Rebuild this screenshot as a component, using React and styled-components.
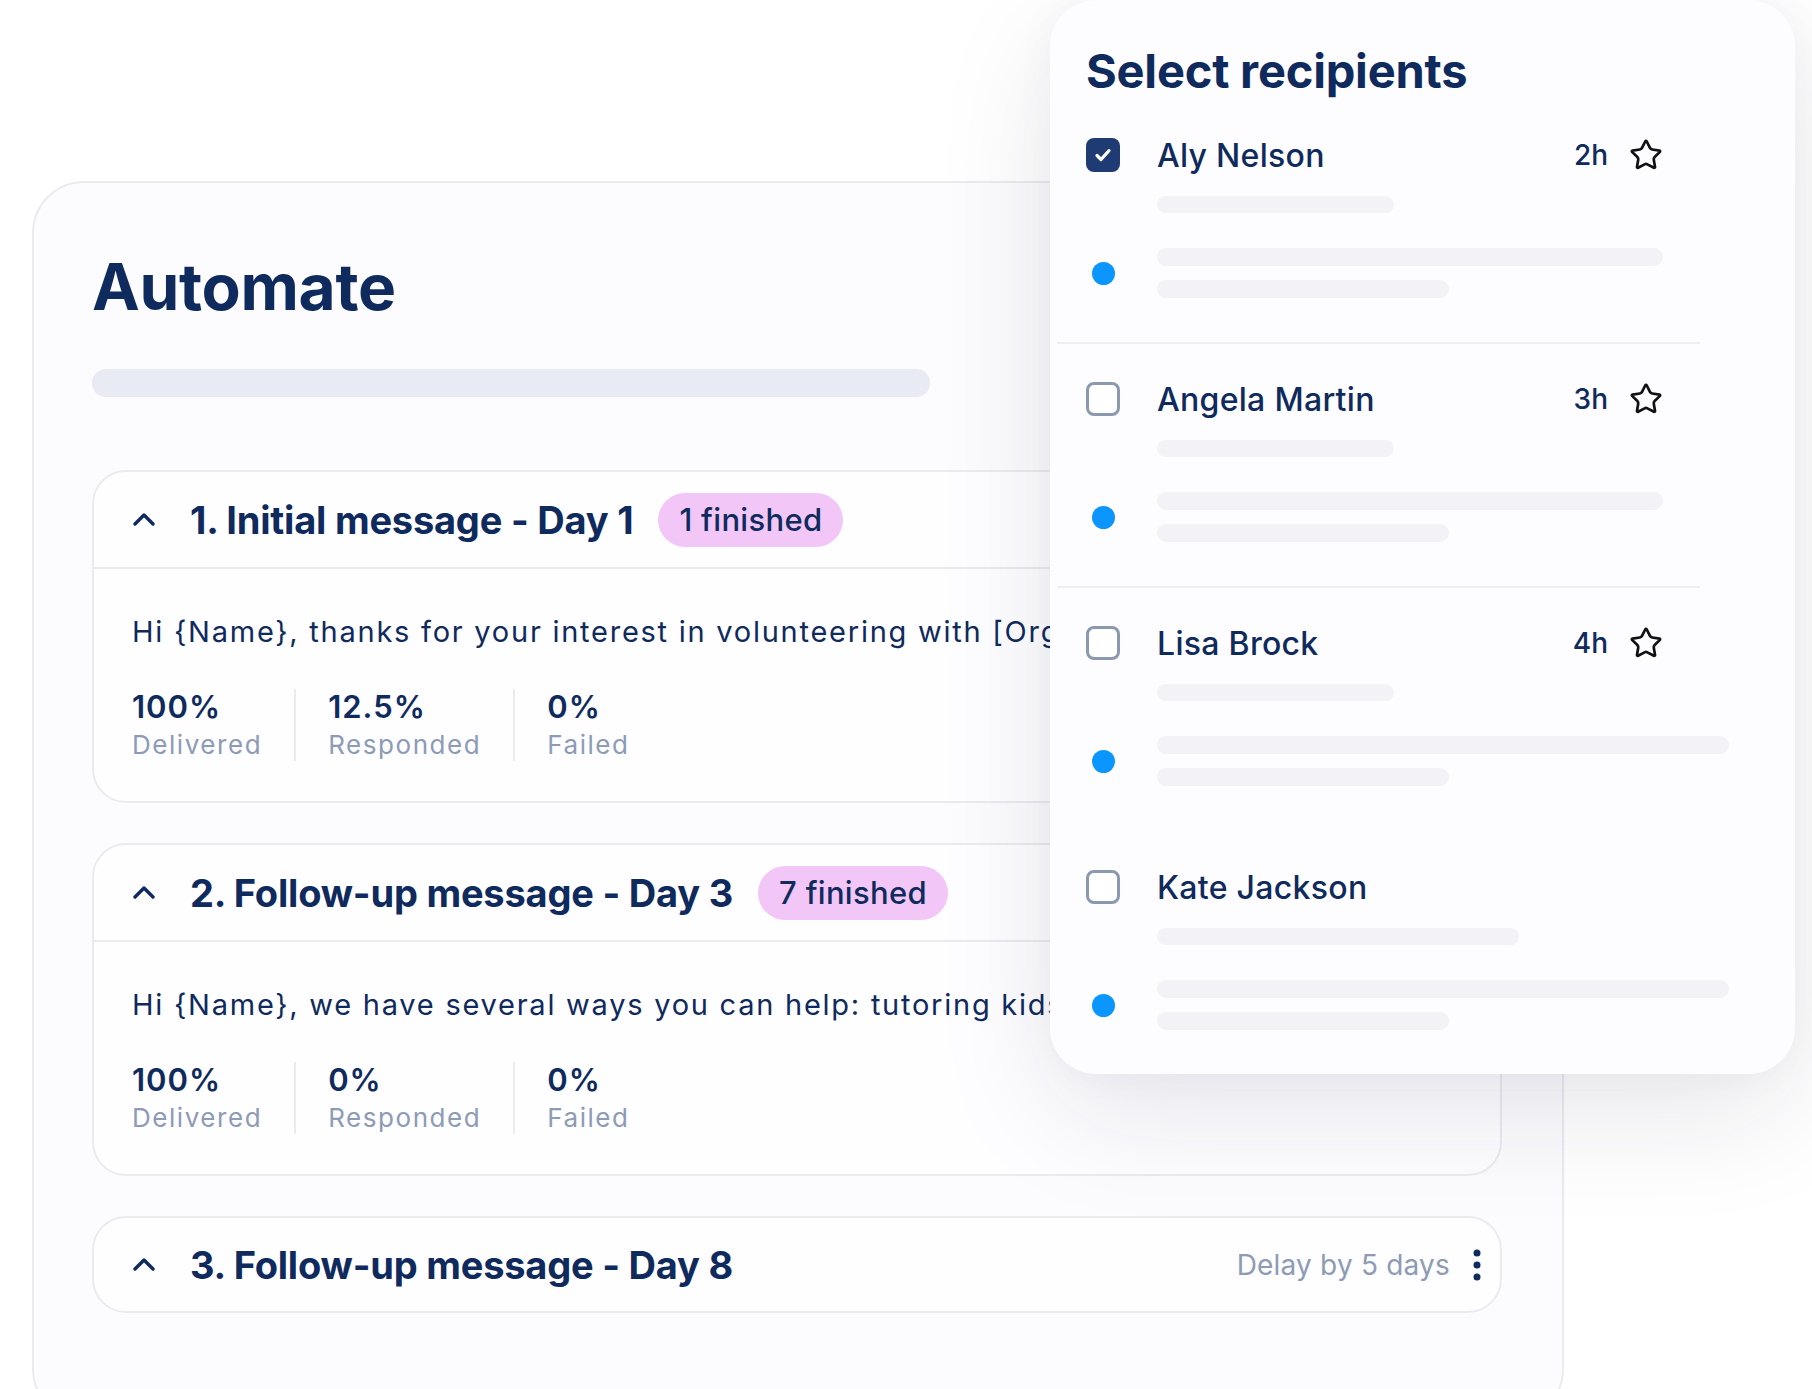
import React from 'react';
import styled, { createGlobalStyle } from 'styled-components';
import { Star } from 'lucide-react';

const NAVY = '#0f2a5c';
const GRAY = '#8d9bb5';
const LINE = '#ebeaef';

const GlobalStyle = createGlobalStyle`
  html, body { margin: 0; padding: 0; background: #ffffff; }
  body {
    font-family: Inter, "Open Sans", "Liberation Sans", sans-serif;
    color: ${NAVY};
    -webkit-font-smoothing: antialiased;
  }
  #root { width: 1812px; height: 1389px; overflow: hidden; }
  *, *::before, *::after { box-sizing: border-box; }
`;

const Stage = styled.div`
  position: relative;
  width: 1812px;
  height: 1389px;
  overflow: hidden;
  padding: 181px 0 0 32px;
`;

const MainCard = styled.section`
  width: 1532px;
  height: 1240px;
  border: 2px solid ${LINE};
  border-radius: 52px;
  background: #fcfbfd;
  padding: 65px 60px 0 58px;
`;

const Heading = styled.h1`
  margin: 0;
  font-size: 64px;
  line-height: 78px;
  font-weight: 700;
  letter-spacing: -0.3px;
  color: ${NAVY};
`;

const TitleBar = styled.div`
  margin-top: 43px;
  width: 838px;
  height: 28px;
  border-radius: 14px;
  background: #e8ebf3;
`;

const Steps = styled.div`
  margin-top: 73px;
  display: flex;
  flex-direction: column;
  gap: 40px;
`;

const StepCard = styled.article`
  border: 2px solid ${LINE};
  border-radius: 34px;
  background: #fefdff;
  overflow: hidden;
`;

const StepHeader = styled.header`
  height: ${p => (p.$open ? '97px' : '93px')};
  display: flex;
  align-items: center;
  padding: 0 19px 0 39px;
  border-bottom: ${p => (p.$open ? `2px solid ${LINE}` : 'none')};
`;

const Chevron = styled.svg`
  flex: none;
  width: 22px;
  height: 13px;
  margin-right: 35px;
`;

const StepTitle = styled.h2`
  margin: 0;
  font-size: 38px;
  line-height: 46px;
  font-weight: 700;
  letter-spacing: -0.2px;
  color: ${NAVY};
  white-space: nowrap;
`;

const Badge = styled.span`
  margin-left: 25px;
  height: 54px;
  padding: 0 21px;
  display: inline-flex;
  align-items: center;
  border-radius: 27px;
  background: #f2c7f8;
  color: ${NAVY};
  font-size: 31px;
  font-weight: 500;
  letter-spacing: 0.3px;
  white-space: nowrap;
`;

const Spacer = styled.div`
  flex: 1;
`;

const Delay = styled.span`
  font-size: 28px;
  color: ${GRAY};
  letter-spacing: 0.2px;
  white-space: nowrap;
`;

const Kebab = styled.svg`
  flex: none;
  width: 8px;
  height: 32px;
  margin-left: 23px;
`;

const StepBody = styled.div`
  padding: 43px 38px 40px;
`;

const Message = styled.p`
  margin: 0;
  font-size: 29px;
  line-height: 39px;
  white-space: nowrap;
  color: ${NAVY};
  letter-spacing: 1.75px;
`;

const Stats = styled.div`
  margin-top: 38px;
  display: flex;
`;

const Stat = styled.div`
  display: flex;
  flex-direction: column;
  padding: 0 32px;
  border-left: 2px solid ${LINE};
  &:first-child {
    padding-left: 0;
    border-left: none;
  }
`;

const StatValue = styled.span`
  font-size: 31px;
  line-height: 36px;
  font-weight: 600;
  letter-spacing: 1px;
  color: ${NAVY};
`;

const StatLabel = styled.span`
  margin-top: 4px;
  font-size: 26px;
  line-height: 32px;
  letter-spacing: 1.55px;
  color: ${GRAY};
`;

/* Recipients panel */
const Panel = styled.aside`
  position: absolute;
  left: 1050px;
  top: 0;
  width: 745px;
  border-radius: 46px;
  background: #fdfcfe;
  box-shadow: 0 40px 120px rgba(25, 30, 70, 0.1), 0 0 40px rgba(25, 30, 70, 0.04);
  padding: 42px 0 0 36px;
`;

const PanelTitle = styled.h2`
  margin: 0;
  font-size: 47px;
  line-height: 58px;
  font-weight: 700;
  letter-spacing: -0.2px;
  color: ${NAVY};
`;

const Row = styled.div`
  margin: 0 95px 0 -29px;
  padding: 35px 37px 44px 29px;
  border-bottom: 2px solid ${p => (p.$divider ? '#f0eff3' : 'transparent')};
  &:last-child {
    border-bottom: none;
  }
`;

const RowLine = styled.div`
  display: grid;
  grid-template-columns: 34px 1fr;
  column-gap: 37px;
  align-items: center;
  margin-top: ${p => p.$gap || 0}px;
`;

const Checkbox = styled.span`
  width: 34px;
  height: 34px;
  border-radius: 8px;
  display: flex;
  align-items: center;
  justify-content: center;
  background: ${p => (p.$checked ? '#1f3b73' : '#ffffff')};
  border: ${p => (p.$checked ? 'none' : '3px solid #8a98b0')};
`;

const NameLine = styled.div`
  height: 40px;
  display: flex;
  align-items: center;
`;

const Name = styled.span`
  flex: 1;
  font-size: 32px;
  font-weight: 500;
  letter-spacing: 0.3px;
  color: ${NAVY};
  white-space: nowrap;
`;

const Time = styled.span`
  font-size: 28px;
  font-weight: 500;
  color: ${NAVY};
  margin-right: 21px;
`;

const Skeleton = styled.div`
  height: ${p => p.$h || 17}px;
  border-radius: 9px;
  background: #f3f2f6;
`;

const SkeletonGroup = styled.div`
  display: flex;
  flex-direction: column;
  gap: 14px;
`;

const Dot = styled.span`
  justify-self: center;
  width: 23px;
  height: 23px;
  border-radius: 50%;
  background: #0a95ff;
`;

const ChevronUp = () => (
  <Chevron viewBox="0 0 22 13" fill="none">
    <polyline points="2,11 11,2 20,11" stroke={NAVY} strokeWidth="3.4" strokeLinecap="round" strokeLinejoin="round" />
  </Chevron>
);

const KebabIcon = () => (
  <Kebab viewBox="0 0 8 32">
    <circle cx="4" cy="4" r="3.5" fill={NAVY} />
    <circle cx="4" cy="16" r="3.5" fill={NAVY} />
    <circle cx="4" cy="28" r="3.5" fill={NAVY} />
  </Kebab>
);

const steps = [
  {
    title: '1. Initial message - Day 1',
    badge: '1 finished',
    message:
      "Hi {Name}, thanks for your interest in volunteering with [Organization]! We'd love to have you join our team.",
    stats: [
      ['100%', 'Delivered'],
      ['12.5%', 'Responded'],
      ['0%', 'Failed'],
    ],
  },
  {
    title: '2. Follow-up message - Day 3',
    badge: '7 finished',
    message:
      'Hi {Name}, we have several ways you can help: tutoring kids, organizing events, or fundraising.',
    stats: [
      ['100%', 'Delivered'],
      ['0%', 'Responded'],
      ['0%', 'Failed'],
    ],
  },
  {
    title: '3. Follow-up message - Day 8',
    delay: 'Delay by 5 days',
  },
];

const recipients = [
  { name: 'Aly Nelson', time: '2h', checked: true, divider: true, s1: 237, s2: 506 },
  { name: 'Angela Martin', time: '3h', divider: true, s1: 237, s2: 506 },
  { name: 'Lisa Brock', time: '4h', s1: 237, s2: 572 },
  { name: 'Kate Jackson', s1: 362, s2: 572 },
];

export default function App() {
  return (
    <>
      <GlobalStyle />
      <Stage>
        <MainCard>
          <Heading>Automate</Heading>
          <TitleBar />
          <Steps>
            {steps.map(step => (
              <StepCard key={step.title}>
                <StepHeader $open={!!step.message}>
                  <ChevronUp />
                  <StepTitle>{step.title}</StepTitle>
                  {step.badge && <Badge>{step.badge}</Badge>}
                  <Spacer />
                  {step.delay && (
                    <>
                      <Delay>{step.delay}</Delay>
                      <KebabIcon />
                    </>
                  )}
                </StepHeader>
                {step.message && (
                  <StepBody>
                    <Message>{step.message}</Message>
                    <Stats>
                      {step.stats.map(([v, l]) => (
                        <Stat key={l}>
                          <StatValue>{v}</StatValue>
                          <StatLabel>{l}</StatLabel>
                        </Stat>
                      ))}
                    </Stats>
                  </StepBody>
                )}
              </StepCard>
            ))}
          </Steps>
        </MainCard>

        <Panel>
          <PanelTitle>Select recipients</PanelTitle>
          {recipients.map(r => (
            <Row key={r.name} $divider={r.divider}>
              <RowLine>
                <Checkbox $checked={r.checked}>
                  {r.checked && (
                    <svg width="22" height="22" viewBox="0 0 22 22" fill="none">
                      <path d="M5 11.5l4 4 8-8.8" stroke="#ffffff" strokeWidth="3.2" strokeLinecap="round" strokeLinejoin="round" />
                    </svg>
                  )}
                </Checkbox>
                <NameLine>
                  <Name>{r.name}</Name>
                  {r.time && (
                    <>
                      <Time>{r.time}</Time>
                      <Star size={34} strokeWidth={1.9} color="#111111" />
                    </>
                  )}
                </NameLine>
              </RowLine>
              <RowLine $gap={21}>
                <span />
                <Skeleton style={{ width: r.s1 }} />
              </RowLine>
              <RowLine $gap={35}>
                <Dot />
                <SkeletonGroup>
                  <Skeleton $h={18} style={{ width: r.s2 }} />
                  <Skeleton $h={18} style={{ width: 292 }} />
                </SkeletonGroup>
              </RowLine>
            </Row>
          ))}
        </Panel>
      </Stage>
    </>
  );
}
